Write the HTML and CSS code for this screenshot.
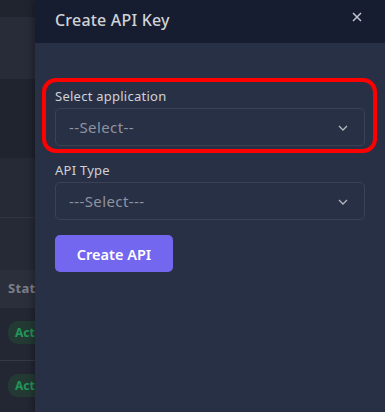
FILE: index.html
```html
<!DOCTYPE html>
<html>
<head>
<meta charset="utf-8">
<link rel="stylesheet" href="styles.css">
</head>
<body>
<div class="screen">
  <div class="backdrop">
    <div class="bd-top"></div>
    <div class="bd-a"></div>
    <div class="bd-b"></div>
    <div class="bd-c"></div>
    <div class="bd-d"></div>
    <div class="bd-th"><span>Status</span></div>
    <div class="bd-row"><span class="badge">Active</span></div>
    <div class="bd-row last"><span class="badge">Active</span></div>
  </div>
  <aside class="panel">
    <header class="panel-head">
      <h2 class="title">Create API Key</h2>
      <button class="close" aria-label="Close">
        <svg width="10" height="10" viewBox="0 0 10 10"><path d="M1 1L9 9M9 1L1 9" stroke="#c3c6cf" stroke-width="1.5" fill="none"/></svg>
      </button>
    </header>
    <div class="panel-body">
      <div class="field">
        <label class="label">Select application</label>
        <div class="select"><span>--Select--</span>
          <svg class="chev" width="10" height="6" viewBox="0 0 10 6"><path d="M1 1L5 5L9 1" stroke="#b4b7bd" stroke-width="1.3" fill="none"/></svg>
        </div>
        <div class="mark"></div>
      </div>
      <div class="field">
        <label class="label">API Type</label>
        <div class="select"><span>---Select---</span>
          <svg class="chev" width="10" height="6" viewBox="0 0 10 6"><path d="M1 1L5 5L9 1" stroke="#b4b7bd" stroke-width="1.3" fill="none"/></svg>
        </div>
      </div>
      <button class="btn">Create API</button>
    </div>
  </aside>
</div>
</body>
</html>
```
FILE: styles.css
```css
* { box-sizing: border-box; }
html, body { margin: 0; padding: 0; }
body {
  width: 385px; height: 412px; overflow: hidden;
  font-family: "Noto Sans", "Open Sans", sans-serif;
  background: #232733;
}
.screen { position: relative; height: 412px; overflow: hidden; }
.backdrop { width: 385px; display: flex; flex-direction: column; height: 412px; }
.bd-top { height: 17px; background: #20242f; }
.bd-a { height: 62px; background: #282c38; }
.bd-b { height: 79px; background: #20242f; }
.bd-c { height: 60px; background: #262a36; border-bottom: 1px solid #30343f; }
.bd-d { height: 52px; background: #262a36; }
.bd-th { height: 38px; background: #2b2f3b; display: flex; align-items: center; padding-left: 8px; }
.bd-th span { color: #7b7f89; font-weight: 700; font-size: 13px; white-space: nowrap; letter-spacing: 0.3px; margin-top: -3px; }
.bd-row { height: 53px; background: #232733; border-bottom: 1px solid #363a46; display: flex; align-items: center; padding-left: 8px; }
.bd-row.last { border-bottom: none; flex: 1; }
.badge { background: #233a34; color: #24955a; font-weight: 700; font-size: 12px; border-radius: 10px; padding: 3px 7px; white-space: nowrap; margin-top: -3px; }

.panel { position: absolute; top: 0; right: 0; bottom: 0; width: 350px; background: #283046; display: flex; flex-direction: column; box-shadow: -3px 0 6px rgba(0,0,0,0.25); }
.panel-head { height: 43px; background: #161d31; display: flex; align-items: center; justify-content: space-between; padding: 0 23px 4px 20px; }
.title { margin: 0; color: #d0d2d6; font-size: 16px; font-weight: 500; letter-spacing: 0.2px; }
.close { background: none; border: none; padding: 0; margin-top: -6px; display: flex; }
.panel-body { padding: 45px 20px 0 20px; display: flex; flex-direction: column; }
.field { position: relative; display: flex; flex-direction: column; margin-bottom: 15px; }
.label { color: #d0d2d6; font-size: 13px; letter-spacing: 0.25px; margin-bottom: 4px; line-height: 16px; }
.field + .field .label { margin-top: 1px; }
.select { height: 38px; border: 1px solid #3b4253; border-radius: 5px; display: flex; align-items: center; justify-content: space-between; padding: 0 16px 0 13px; color: #8e93a0; font-size: 15px; letter-spacing: 0.4px; }
.chev { margin-top: 2px; }
.mark { position: absolute; left: -13px; top: -10px; width: 335px; height: 75px; border: 4px solid #ff0000; border-radius: 14px; pointer-events: none; }
.btn { width: 118px; height: 37px; background: #7367f0; color: #fff; border: none; border-radius: 5px; font-family: inherit; font-size: 14.5px; font-weight: 600; padding: 0; }
```
